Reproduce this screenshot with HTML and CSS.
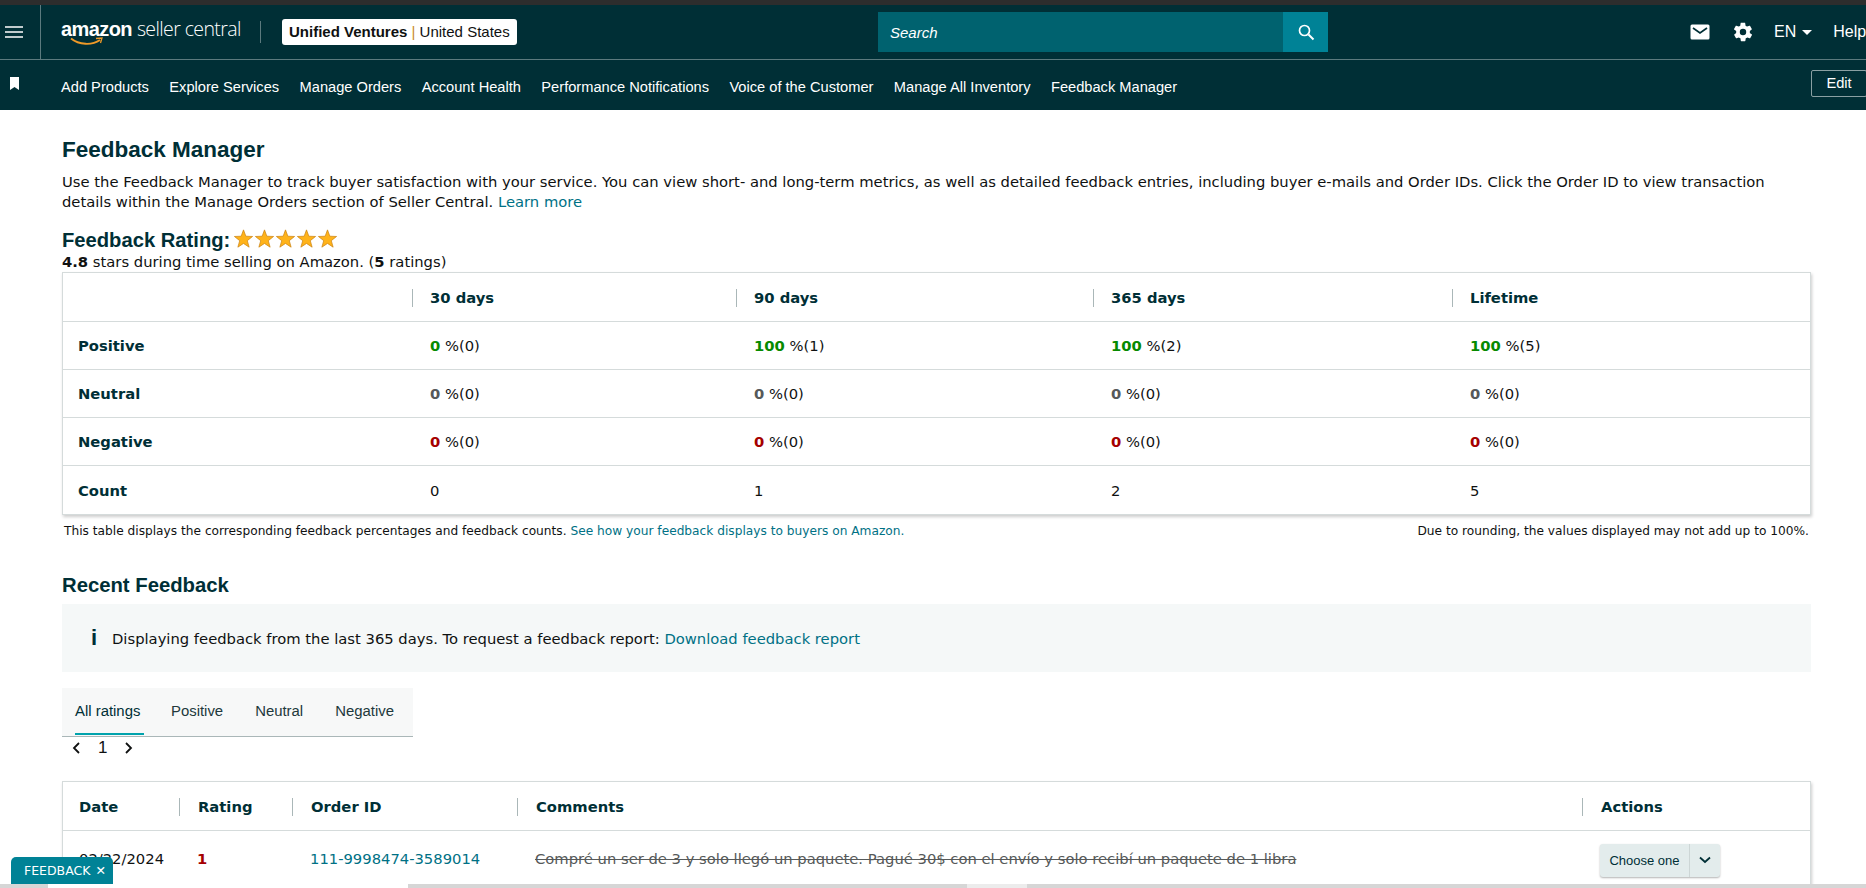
FILE: index.html
```html
<!DOCTYPE html>
<html lang="en">
<head>
    <meta charset="UTF-8">
    <title>Feedback Manager - Seller Central</title>
    <link rel="stylesheet" href="styles.css">
</head>
<body>
    <div class="top-strip"></div>
    <header class="topbar">
        <div class="menu-cell">
            <svg width="18" height="12" viewBox="0 0 18 12"><path d="M0 1h18M0 6h18M0 11h18" stroke="#fff" stroke-width="1.6"/></svg>
        </div>
        <div class="logo">
            <span class="logo-amazon">amazon</span><span class="logo-rest">seller central</span>
            <svg class="logo-arrow" width="34" height="10" viewBox="0 0 34 10"><path d="M1 1.5C9 8 22 8.5 30 3" fill="none" stroke="#f09a28" stroke-width="1.8"/><path d="M26 1.5L32 1l-1.5 5" fill="none" stroke="#f09a28" stroke-width="1.3"/></svg>
        </div>
        <div class="logo-sep"></div>
        <div class="account"><b>Unified Ventures</b> <i>|</i> United States</div>
        <div class="search">
            <span class="search-text">Search</span>
            <button class="search-btn">
                <svg width="18" height="18" viewBox="0 0 18 18"><circle cx="7.5" cy="7.5" r="5" fill="none" stroke="#fff" stroke-width="1.7"/><path d="M11.5 11.5L16.5 16.5" stroke="#fff" stroke-width="1.9"/></svg>
            </button>
        </div>
        <div class="top-right">
            <svg width="20" height="16" viewBox="0 0 20 16"><rect x="0.5" y="0.5" width="19" height="15" rx="1.5" fill="#fff"/><path d="M3 4l7 5 7-5" fill="none" stroke="#002f36" stroke-width="1.7"/></svg>
            <svg class="gear" width="22" height="22" viewBox="0 0 24 24"><path fill="#fff" fill-rule="evenodd" d="M19.4 13c0-.3.1-.7.1-1s0-.7-.1-1l2.100-1.600c.2-.2.2-.4.1-.6l-2-3.500c-.1-.2-.4-.3-.6-.2l-2.500 1c-.5-.4-1.100-.7-1.700-1l-.4-2.700c0-.2-.2-.4-.5-.4h-4c-.3 0-.5.2-.5.4l-.4 2.700c-.6.3-1.200.6-1.700 1l-2.500-1c-.2-.1-.5 0-.6.2l-2 3.500c-.1.2-.1.4.1.6L4.600 11c0 .3-.1.7-.1 1s0 .7.1 1l-2.100 1.600c-.2.2-.2.4-.1.6l2 3.500c.1.2.4.3.6.2l2.500-1c.5.4 1.100.7 1.700 1l.4 2.700c0 .2.2.4.5.4h4c.3 0 .5-.2.5-.4l.4-2.700c.6-.3 1.200-.6 1.700-1l2.500 1c.2.1.5 0 .6-.2l2-3.500c.1-.2.1-.4-.1-.6L19.400 13zM12 15.500a3.500 3.500 0 1 1 0-7 3.500 3.500 0 0 1 0 7z"/></svg>
            <span class="lang">EN</span>
            <span class="caret"></span>
            <span class="help">Help</span>
        </div>
    </header>
    <nav class="navbar">
        <svg class="bookmark" width="11" height="13" viewBox="0 0 11 13"><path d="M1 0h9v13L5.500 10 1 13z" fill="#fff"/></svg>
        <a>Add Products</a>
        <a>Explore Services</a>
        <a>Manage Orders</a>
        <a>Account Health</a>
        <a>Performance Notifications</a>
        <a>Voice of the Customer</a>
        <a>Manage All Inventory</a>
        <a>Feedback Manager</a>
        <span class="edit">Edit</span>
    </nav>

    <main class="content">
        <h1>Feedback Manager</h1>
        <p class="intro">Use the Feedback Manager to track buyer satisfaction with your service. You can view short- and long-term metrics, as well as detailed feedback entries, including buyer e-mails and Order IDs. Click the Order ID to view transaction<br>details within the Manage Orders section of Seller Central. <a>Learn more</a></p>

        <div class="rating-head">
            <h2>Feedback Rating:</h2>
            <div class="stars">
                <svg width="21" height="20" viewBox="0 0 24 23"><polygon class="star" points="12,1 14.700,8.300 22.460,8.600 16.370,13.400 18.470,20.900 12,16.600 5.530,20.900 7.630,13.400 1.540,8.600 9.300,8.300"/></svg>
                <svg width="21" height="20" viewBox="0 0 24 23"><polygon class="star" points="12,1 14.700,8.300 22.460,8.600 16.370,13.400 18.470,20.900 12,16.600 5.530,20.900 7.630,13.400 1.540,8.600 9.300,8.300"/></svg>
                <svg width="21" height="20" viewBox="0 0 24 23"><polygon class="star" points="12,1 14.700,8.300 22.460,8.600 16.370,13.400 18.470,20.900 12,16.600 5.530,20.900 7.630,13.400 1.540,8.600 9.300,8.300"/></svg>
                <svg width="21" height="20" viewBox="0 0 24 23"><polygon class="star" points="12,1 14.700,8.300 22.460,8.600 16.370,13.400 18.470,20.900 12,16.600 5.530,20.900 7.630,13.400 1.540,8.600 9.300,8.300"/></svg>
                <svg width="21" height="20" viewBox="0 0 24 23"><polygon class="star" points="12,1 14.700,8.300 22.460,8.600 16.370,13.400 18.470,20.900 12,16.600 5.530,20.900 7.630,13.400 1.540,8.600 9.300,8.300"/></svg>
            </div>
        </div>
        <p class="rating-sub"><b>4.8</b> stars during time selling on Amazon. (<b>5</b> ratings)</p>

        <div class="card">
            <div class="grid metrics head-row">
                <div></div>
                <div class="th">30 days</div>
                <div class="th">90 days</div>
                <div class="th">365 days</div>
                <div class="th">Lifetime</div>
            </div>
            <div class="grid metrics row">
                <div class="label">Positive</div>
                <div><b class="good">0</b> %(0)</div>
                <div><b class="good">100</b> %(1)</div>
                <div><b class="good">100</b> %(2)</div>
                <div><b class="good">100</b> %(5)</div>
            </div>
            <div class="grid metrics row">
                <div class="label">Neutral</div>
                <div><b class="neutral">0</b> %(0)</div>
                <div><b class="neutral">0</b> %(0)</div>
                <div><b class="neutral">0</b> %(0)</div>
                <div><b class="neutral">0</b> %(0)</div>
            </div>
            <div class="grid metrics row">
                <div class="label">Negative</div>
                <div><b class="bad">0</b> %(0)</div>
                <div><b class="bad">0</b> %(0)</div>
                <div><b class="bad">0</b> %(0)</div>
                <div><b class="bad">0</b> %(0)</div>
            </div>
            <div class="grid metrics row">
                <div class="label">Count</div>
                <div>0</div>
                <div>1</div>
                <div>2</div>
                <div>5</div>
            </div>
        </div>
        <div class="table-note">
            <span>This table displays the corresponding feedback percentages and feedback counts. <a>See how your feedback displays to buyers on Amazon.</a></span>
            <span>Due to rounding, the values displayed may not add up to 100%.</span>
        </div>

        <h2 class="recent-title">Recent Feedback</h2>
        <div class="info-box">
            <span class="info-icon">i</span>
            <span>Displaying feedback from the last 365 days. To request a feedback report: <a>Download feedback report</a></span>
        </div>

        <div class="tabs">
            <span class="tab active">All ratings</span>
            <span class="tab">Positive</span>
            <span class="tab">Neutral</span>
            <span class="tab">Negative</span>
        </div>
        <div class="pager">
            <svg width="10" height="14" viewBox="0 0 10 14"><path d="M8 2L3 7l5 5" fill="none" stroke="#0f1111" stroke-width="1.800"/></svg>
            <span>1</span>
            <svg width="10" height="14" viewBox="0 0 10 14"><path d="M2 2l5 5-5 5" fill="none" stroke="#0f1111" stroke-width="1.800"/></svg>
        </div>

        <div class="card">
            <div class="grid recent head-row">
                <div class="th first">Date</div>
                <div class="th">Rating</div>
                <div class="th">Order ID</div>
                <div class="th">Comments</div>
                <div class="th">Actions</div>
            </div>
            <div class="grid recent row tall">
                <div class="first">02/22/2024</div>
                <div><b class="bad">1</b></div>
                <div><a>111-9998474-3589014</a></div>
                <div class="struck">Compré un ser de 3 y solo llegó un paquete. Pagué 30$ con el envío y solo recibí un paquete de 1 libra</div>
                <div class="split-btn"><span class="split-main">Choose one</span><span class="split-arrow"><svg width="12" height="8" viewBox="0 0 12 8"><path d="M1 1.500l5 4.500 5-4.500" fill="none" stroke="#002f36" stroke-width="1.800"/></svg></span></div>
            </div>
        </div>
    </main>

    <div class="feedback-tab">FEEDBACK <span class="x">✕</span></div>
    <div class="bottom-strip">
        <div class="bottom-white"></div>
        <div class="bottom-light"></div>
    </div>
</body>
</html>
```

FILE: styles.css
```css
html, body {
    margin: 0;
    height: 888px;
    overflow: hidden;
}
body {
    font-family: "DejaVu Sans", Verdana, sans-serif;
    font-size: 14.75px;
    color: #0f1111;
    background: #fff;
    position: relative;
}
a { color: #007185; }
.top-strip {
    height: 5px;
    background: #2d2d2d;
}
.topbar {
    height: 54px;
    background: #002f36;
    border-bottom: 1px solid #5c7a7e;
    display: flex;
    align-items: center;
    color: #fff;
}
.menu-cell {
    width: 41px;
    height: 54px;
    border-right: 1px solid #5c7a7e;
    display: flex;
    align-items: center;
    padding-left: 5px;
    box-sizing: border-box;
}
.logo {
    position: relative;
    margin-left: 20px;
    width: 199px;
    display: flex;
    align-items: baseline;
    margin-top: -8px;
}
.logo-amazon {
    font-family: "Liberation Sans", Arial, sans-serif;
    font-weight: 700;
    font-size: 20px;
    letter-spacing: -0.6px;
}
.logo-rest {
    font-family: "Open Sans", sans-serif;
    font-weight: 300;
    font-size: 19.5px;
    letter-spacing: -0.6px;
    margin-left: 5px;
}
.logo-arrow {
    position: absolute;
    left: 9px;
    top: 22px;
}
.logo-sep {
    width: 1px;
    height: 22px;
    background: #5c7a7e;
}
.account {
    margin-left: 21px;
    background: #fff;
    color: #0f1111;
    height: 26px;
    line-height: 26px;
    padding: 0 7px;
    border-radius: 3px;
    font-family: "Liberation Sans", Arial, sans-serif;
    font-size: 15px;
    white-space: nowrap;
}
.account i {
    color: #c98a2b;
    font-style: normal;
}
.search {
    position: absolute;
    left: 878px;
    top: 12px;
    width: 450px;
    height: 40px;
    background: #00626f;
    display: flex;
    justify-content: space-between;
    align-items: center;
}
.search-text {
    font-family: "Liberation Sans", Arial, sans-serif;
    font-style: italic;
    font-size: 15px;
    margin-left: 12px;
    color: #fff;
}
.search-btn {
    width: 45px;
    height: 40px;
    border: 0;
    padding: 0;
    background: #008296;
    display: flex;
    align-items: center;
    justify-content: center;
}
.top-right {
    position: absolute;
    left: 1690px;
    top: 12px;
    display: flex;
    align-items: center;
    font-family: "Liberation Sans", Arial, sans-serif;
    font-size: 16px;
    height: 40px;
    white-space: nowrap;
}
.gear { margin-left: 22px; }
.lang { margin-left: 20px; }
.caret {
    width: 0;
    height: 0;
    border: 5px solid transparent;
    border-top: 5px solid #fff;
    border-bottom: 0;
    margin-left: 6px;
}
.help { margin-left: 21px; }
.navbar {
    height: 50px;
    background: #002f36;
    display: flex;
    align-items: center;
    position: relative;
    font-family: "Liberation Sans", Arial, sans-serif;
    font-size: 14.65px;
    color: #fff;
    padding-left: 61px;
    gap: 20.4px;
    line-height: 20px;
}
.navbar a {
    color: #fff;
    margin-top: 4px;
}
.bookmark {
    position: absolute;
    left: 9px;
    top: 17px;
}
.edit {
    position: absolute;
    right: -1px;
    top: 10px;
    width: 54px;
    height: 25px;
    line-height: 25px;
    text-align: center;
    border: 1px solid #8aa0a3;
    border-radius: 2px;
}
.content {
    padding: 0 55px 0 62px;
}
h1, h2 {
    font-family: "Liberation Sans", Arial, sans-serif;
    color: #002f36;
    font-weight: 700;
    margin: 0;
}
h1 {
    font-size: 22.5px;
    line-height: 24px;
    padding-top: 28px;
}
.intro {
    margin: 10px 0 0;
    line-height: 20px;
    color: #0f1111;
}
.rating-head {
    display: flex;
    align-items: center;
    margin-top: 16px;
    height: 24px;
}
.rating-head h2 {
    font-size: 20.2px;
}
.stars {
    display: flex;
    margin-left: 3px;
    margin-top: -3px;
}
.star {
    fill: #ffb31a;
    stroke: #c9800f;
    stroke-width: 0.8;
}
.rating-sub {
    margin: 0;
    line-height: 20px;
}
.card {
    background: #fff;
    border: 1px solid #d5dbdb;
    box-shadow: 1px 2px 3px rgba(0, 0, 0, 0.2);
}
.grid {
    display: grid;
    align-items: center;
}
.metrics {
    grid-template-columns: 349px 324px 357px 359px 1fr;
}
.recent {
    grid-template-columns: 116px 113px 225px 1065px 1fr;
}
.head-row {
    height: 48px;
    border-bottom: 1px solid #d5dbdb;
}
.th {
    font-weight: 700;
    color: #002f36;
    height: 18px;
    line-height: 18px;
    margin-top: 2px;
    padding-left: 17px;
    border-left: 1px solid #aab7b8;
}
.recent .th { padding-left: 18px; }
.row {
    height: 47px;
    border-bottom: 1px solid #d5dbdb;
}
.row:last-child {
    height: 48px;
    border-bottom: 0;
}
.row > div {
    padding-left: 18px;
}
.row > .label {
    padding-left: 15px;
    font-weight: 700;
    color: #002f36;
}
.good { color: #078a00; }
.neutral { color: #565959; }
.bad { color: #a50000; }
.table-note {
    display: flex;
    justify-content: space-between;
    font-size: 12.2px;
    line-height: 14px;
    margin: 9px 2px 0;
}
.recent-title {
    font-size: 20.3px;
    line-height: 24px;
    margin-top: 35px;
}
.info-box {
    margin-top: 7px;
    height: 68px;
    background: #f5f8f8;
    display: flex;
    align-items: center;
    padding-left: 29px;
}
.info-icon {
    font-family: "Liberation Sans", Arial, sans-serif;
    font-weight: 700;
    font-size: 22px;
    width: 21px;
    color: #002f36;
}
.tabs {
    margin-top: 16px;
    width: 351px;
    height: 48px;
    background: #f7f8f8;
    border-bottom: 1px solid #aab7b8;
    display: flex;
    gap: 32px;
    font-family: "Liberation Sans", Arial, sans-serif;
    font-size: 14.9px;
    color: #22383c;
}
.tab {
    height: 46px;
    line-height: 47px;
}
.tab.active {
    color: #002f36;
    margin-left: 13px;
    margin-right: -5px;
    height: 45px;
    border-bottom: 2px solid #00a3ad;
    width: 69px;
    white-space: nowrap;
}
.pager {
    display: flex;
    align-items: center;
    gap: 17px;
    height: 22px;
    padding-left: 9px;
    font-family: "Liberation Sans", Arial, sans-serif;
    font-size: 17px;
    margin-bottom: 22px;
}
.row.tall {
    height: 58px;
    margin-bottom: 30px;
}
.row.tall > div {
    margin-bottom: 3px;
}
.row > .first { padding-left: 16px; }
.th.first,
.recent .th.first {
    border-left: 0;
    padding-left: 16px;
}
.struck {
    text-decoration: line-through;
    color: #565959;
    white-space: nowrap;
}
.row.tall > .split-btn {
    padding-left: 0;
    display: flex;
    margin: 0 0 0 18px;
    height: 33px;
    width: 120px;
    background: #e3ecec;
    border-radius: 3px;
    box-shadow: 0 1px 2px rgba(0, 0, 0, 0.3);
    font-family: "Liberation Sans", Arial, sans-serif;
    font-size: 13px;
    color: #002f36;
}
.split-main {
    width: 89px;
    line-height: 33px;
    text-align: center;
}
.split-arrow {
    flex: 1;
    border-left: 1px solid #cdd6d6;
    display: flex;
    align-items: center;
    justify-content: center;
}
.feedback-tab {
    position: absolute;
    left: 11px;
    top: 857px;
    width: 89px;
    height: 27px;
    padding-left: 13px;
    line-height: 28px;
    background: #008296;
    border-radius: 5px 5px 0 0;
    color: #fff;
    font-size: 12.5px;
    white-space: nowrap;
}
.x { margin-left: 1px; }
.bottom-strip {
    position: absolute;
    left: 0;
    right: 0;
    top: 884px;
    height: 4px;
    background: #d6d6d6;
    display: flex;
}
.bottom-white {
    width: 360px;
    margin-left: 48px;
    background: #fff;
}
.bottom-light {
    width: 60px;
    margin-left: 559px;
    background: #ececec;
}
```
